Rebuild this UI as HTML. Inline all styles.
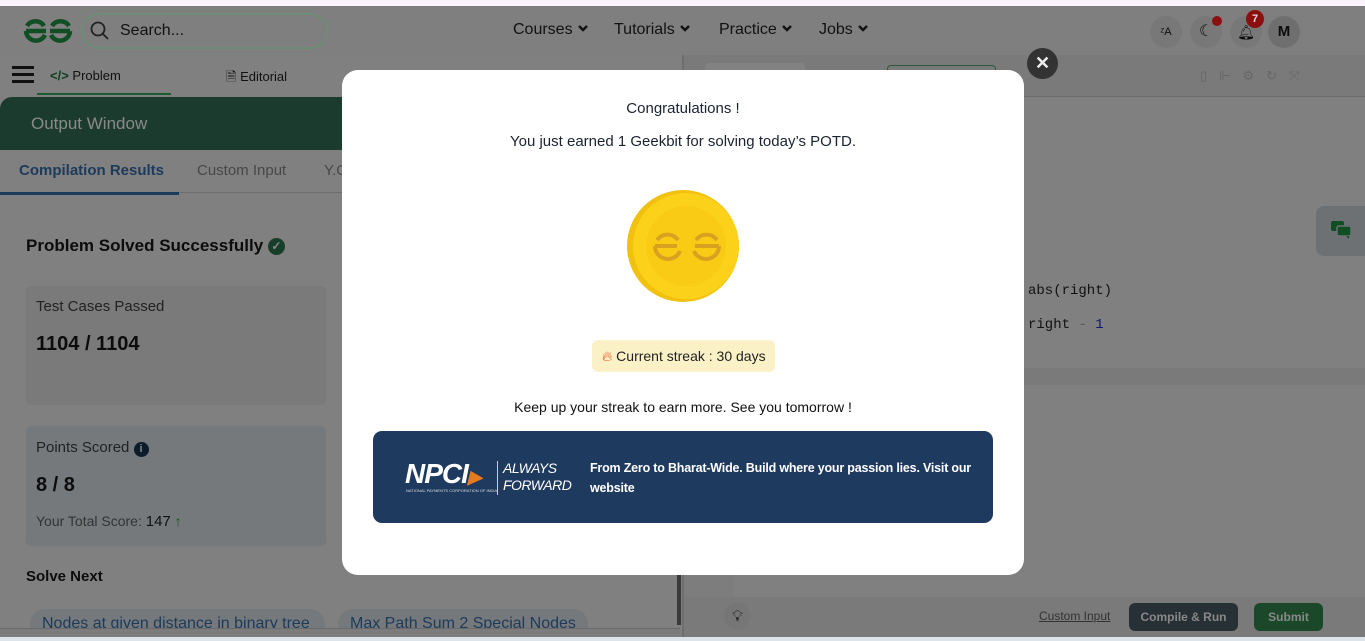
<!DOCTYPE html>
<html><head><meta charset="utf-8"><style>
*{margin:0;padding:0;box-sizing:border-box}
body{width:1365px;height:641px;overflow:hidden;background:#808080;font-family:"Liberation Sans",sans-serif;position:relative;color:#0c0c0c}
.a{position:absolute}
.nav{font-size:16px;color:#111;top:21px}
.chev{display:inline-block;width:10px;height:10px;margin-left:5px;vertical-align:1px}
</style></head><body>
<div class="a" style="left:0;top:0;width:1365px;height:6px;background:#fbf3fb"></div>
<div class="a" style="left:0;top:6px;width:1365px;height:49px;background:#7f7f7f"></div>
<svg class="a" style="left:22px;top:18px" width="52" height="26" viewBox="0 0 52 26"><path d="M4 13h20M4 13a10 10 0 0 0 19 4M5 8a10 10 0 0 1 17 0M48 13H28M48 13a10 10 0 0 1-19 4M47 8a10 10 0 0 0-17 0" stroke="#114e23" stroke-width="4.5" fill="none"/></svg>
<div class="a" style="left:81px;top:13px;width:247px;height:36px;border:2px solid #6d8d76;border-radius:18px"></div>
<svg class="a" style="left:90px;top:21px" width="20" height="20"><circle cx="8" cy="8" r="6.5" stroke="#222" stroke-width="1.8" fill="none"/><path d="M13 13l5 5" stroke="#222" stroke-width="1.8"/></svg>
<div class="a" style="left:120px;top:22px;font-size:16px;color:#111">Search...</div>
<div class="a nav" style="left:513px">Courses<svg class="chev" viewBox="0 0 10 10"><path d="M1 3l4 4 4-4" stroke="#111" stroke-width="2.4" fill="none"/></svg></div>
<div class="a nav" style="left:614px">Tutorials<svg class="chev" viewBox="0 0 10 10"><path d="M1 3l4 4 4-4" stroke="#111" stroke-width="2.4" fill="none"/></svg></div>
<div class="a nav" style="left:719px">Practice<svg class="chev" viewBox="0 0 10 10"><path d="M1 3l4 4 4-4" stroke="#111" stroke-width="2.4" fill="none"/></svg></div>
<div class="a nav" style="left:819px">Jobs<svg class="chev" viewBox="0 0 10 10"><path d="M1 3l4 4 4-4" stroke="#111" stroke-width="2.4" fill="none"/></svg></div>
<div class="a" style="left:1150px;top:16px;width:32px;height:32px;border-radius:50%;background:#787878;font-size:11px;text-align:center;line-height:32px">ᶻA</div>
<div class="a" style="left:1190px;top:16px;width:32px;height:32px;border-radius:50%;background:#787878;text-align:center;line-height:32px;font-size:16px">☾</div>
<div class="a" style="left:1212px;top:16px;width:10px;height:10px;border-radius:50%;background:#8b0f0f"></div>
<div class="a" style="left:1230px;top:16px;width:32px;height:32px;border-radius:50%;background:#787878;text-align:center;line-height:32px;font-size:14px">🔔︎</div>
<div class="a" style="left:1246px;top:10px;width:18px;height:18px;border-radius:50%;background:#8b0f0f;color:#ddd;font-size:11px;text-align:center;line-height:18px;font-weight:bold">7</div>
<div class="a" style="left:1268px;top:16px;width:32px;height:32px;border-radius:50%;background:#6f6f6f;text-align:center;line-height:32px;font-weight:bold;font-size:15px">M</div>
<div class="a" style="left:12px;top:66px;width:22px;height:3px;background:#111;box-shadow:0 7px 0 #111,0 14px 0 #111"></div>
<div class="a" style="left:50px;top:68px;font-size:13px;color:#113d22;font-weight:bold">&lt;/&gt; <span style="font-weight:normal;color:#111">Problem</span></div>
<div class="a" style="left:37px;top:93px;width:134px;height:2px;background:#1d5a34"></div>
<div class="a" style="left:226px;top:68px;font-size:13px;color:#111">🗎 Editorial</div>
<div class="a" style="left:0;top:97px;width:680px;height:53px;background:#1b3b2f;border-radius:12px 0 0 0"></div>
<div class="a" style="left:31px;top:114px;font-size:17px;color:#8a8a8a">Output Window</div>
<div class="a" style="left:19px;top:162px;font-size:15px;font-weight:bold;color:#1c3a5a">Compilation Results</div>
<div class="a" style="left:197px;top:162px;font-size:15px;color:#474747">Custom Input</div>
<div class="a" style="left:324px;top:162px;font-size:15px;color:#474747">Y.O</div>
<div class="a" style="left:0;top:192px;width:680px;height:1px;background:#6e6e6e"></div>
<div class="a" style="left:0;top:192px;width:179px;height:3px;background:#1c3a5a"></div>
<div class="a" style="left:26px;top:236px;font-size:17px;font-weight:bold">Problem Solved Successfully <span style="display:inline-block;width:17px;height:17px;border-radius:50%;background:#173d2b;color:#888;font-size:12px;text-align:center;line-height:17px;vertical-align:1px">✓</span></div>
<div class="a" style="left:26px;top:286px;width:300px;height:119px;background:#7a7a7a;border-radius:6px"></div>
<div class="a" style="left:36px;top:298px;font-size:15px;color:#222">Test Cases Passed</div>
<div class="a" style="left:36px;top:333px;font-size:20px;font-weight:bold">1104 / 1104</div>
<div class="a" style="left:26px;top:426px;width:300px;height:120px;background:#75797b;border-radius:6px"></div>
<div class="a" style="left:36px;top:439px;font-size:15px;color:#222">Points Scored <span style="display:inline-block;width:15px;height:15px;border-radius:50%;background:#0c1c2a;color:#888;font-size:11px;text-align:center;line-height:15px;font-weight:bold">i</span></div>
<div class="a" style="left:36px;top:474px;font-size:20px;font-weight:bold">8 / 8</div>
<div class="a" style="left:36px;top:513px;font-size:14px;color:#333">Your Total Score: <span style="font-size:15px;color:#111">147</span> <span style="color:#0c5a22;font-weight:bold">↑</span></div>
<div class="a" style="left:26px;top:568px;font-size:15px;font-weight:bold">Solve Next</div>
<div class="a" style="left:30px;top:609px;width:295px;height:30px;background:#76797b;border-radius:15px;overflow:hidden;font-size:16px;color:#1c3a5a;padding:6px 12px;white-space:nowrap">Nodes at given distance in binary tree</div>
<div class="a" style="left:338px;top:609px;width:250px;height:30px;background:#76797b;border-radius:15px;overflow:hidden;font-size:16px;color:#1c3a5a;padding:6px 12px;white-space:nowrap">Max Path Sum 2 Special Nodes</div>
<div class="a" style="left:0;top:628px;width:680px;height:13px;background:#7c7c7c;border-top:1px solid #6a6a6a"></div>
<div class="a" style="left:677px;top:575px;width:4px;height:50px;background:#3a3a3a"></div>
<div class="a" style="left:682px;top:55px;width:2px;height:586px;background:#6e6e6e"></div>
<div class="a" style="left:684px;top:55px;width:681px;height:42px;background:#7a7a7a;border-bottom:1px solid #6c6c6c"></div>
<div class="a" style="left:705px;top:63px;width:100px;height:30px;background:#828282;border-radius:4px"></div>
<div class="a" style="left:887px;top:65px;width:109px;height:30px;border:1px solid #2d5a3a;border-radius:4px"></div>
<div class="a" style="left:1200px;top:68px;font-size:13px;color:#666;letter-spacing:12px">▯⊩⚙↻⤧</div>
<div class="a" style="left:1316px;top:206px;width:49px;height:50px;background:#6d7174;border-radius:8px 0 0 8px"></div>
<svg class="a" style="left:1331px;top:220px" width="22" height="20"><rect x="0" y="1" width="13" height="10" rx="2" fill="#114e23"/><rect x="6" y="6" width="14" height="10" rx="2" fill="#114e23" stroke="#6d7174" stroke-width="1.5"/><path d="M15 16l3 3v-3z" fill="#114e23"/></svg>
<div class="a" style="left:1028px;top:283px;font-family:'Liberation Mono',monospace;font-size:14px;color:#111">abs(right)</div>
<div class="a" style="left:1028px;top:317px;font-family:'Liberation Mono',monospace;font-size:14px;color:#111">right <span style="color:#555">-</span> <span style="color:#0b1a6a">1</span></div>
<div class="a" style="left:1024px;top:368px;width:341px;height:17px;background:#7a7a7a"></div>
<div class="a" style="left:684px;top:380px;width:50px;height:217px;background:#7d7d7d"></div>
<div class="a" style="left:684px;top:597px;width:681px;height:40px;background:#7a7a7a"></div>
<div class="a" style="left:724px;top:603px;width:27px;height:27px;border-radius:50%;background:#767676;text-align:center;line-height:27px;font-size:15px">💡︎</div>
<div class="a" style="left:1039px;top:609px;font-size:12px;color:#333;text-decoration:underline">Custom Input</div>
<div class="a" style="left:1129px;top:603px;width:109px;height:28px;background:#273035;border-radius:6px;color:#888;font-size:12px;font-weight:bold;text-align:center;line-height:28px">Compile &amp; Run</div>
<div class="a" style="left:1254px;top:603px;width:69px;height:28px;background:#1b4828;border-radius:6px;color:#888;font-size:12px;font-weight:bold;text-align:center;line-height:28px">Submit</div>
<div class="a" style="left:0;top:637px;width:1365px;height:4px;background:#dde4ea"></div>
<div class="a" style="left:342px;top:70px;width:682px;height:505px;background:#fff;border-radius:16px"></div>
<div class="a" style="left:1027px;top:48px;width:31px;height:31px;border-radius:50%;background:#333;color:#eee;text-align:center;line-height:31px;font-size:18px;font-weight:bold">✕</div>
<div class="a" style="left:342px;top:100px;width:682px;text-align:center;font-size:15px;color:#1b2230">Congratulations !</div>
<div class="a" style="left:342px;top:133px;width:682px;text-align:center;font-size:15px;color:#1b2230">You just earned 1 Geekbit for solving today’s POTD.</div>
<svg class="a" style="left:625px;top:188px" width="118" height="120" viewBox="0 0 118 120"><circle cx="58" cy="58" r="56" fill="#f2c00f"/><circle cx="61" cy="58" r="53" fill="#fbd11a"/><circle cx="61" cy="58" r="40" fill="#f9cb15"/><path d="M30 58h22M30 58a13 13 0 0 0 25 5M32 52a13 13 0 0 1 21 0M94 58H70M94 58a13 13 0 0 1-25 5M92 52a13 13 0 0 0-21 0" stroke="#d9a120" stroke-width="4" fill="none"/></svg>
<div class="a" style="left:592px;top:340px;width:183px;height:32px;background:#fbf1c6;border-radius:6px;font-size:14px;color:#222;line-height:32px;padding-left:10px"><span style="color:#e8541c">🔥︎</span> Current streak : 30 days</div>
<div class="a" style="left:342px;top:399px;width:682px;text-align:center;font-size:14px;color:#111">Keep up your streak to earn more. See you tomorrow !</div>
<div class="a" style="left:373px;top:431px;width:620px;height:92px;background:#1f3a5f;border-radius:9px"></div>
<div class="a" style="left:405px;top:458px;font-size:28px;font-style:italic;font-weight:bold;color:#fff;letter-spacing:-1px">NPCI<span style="color:#e67a1c;font-size:18px">▶</span></div>
<div class="a" style="left:406px;top:488px;font-size:4px;color:#ddd">NATIONAL PAYMENTS CORPORATION OF INDIA</div>
<div class="a" style="left:497px;top:461px;width:1px;height:34px;background:#ccc"></div>
<div class="a" style="left:503px;top:460px;font-size:14px;font-style:italic;color:#fff;line-height:17px;letter-spacing:-0.5px">ALWAYS<br>FORWARD</div>
<div class="a" style="left:590px;top:458px;width:390px;font-size:12.5px;color:#fff;line-height:20px;font-weight:bold;letter-spacing:-0.2px">From Zero to Bharat-Wide. Build where your passion lies. Visit our website</div>
</body></html>
